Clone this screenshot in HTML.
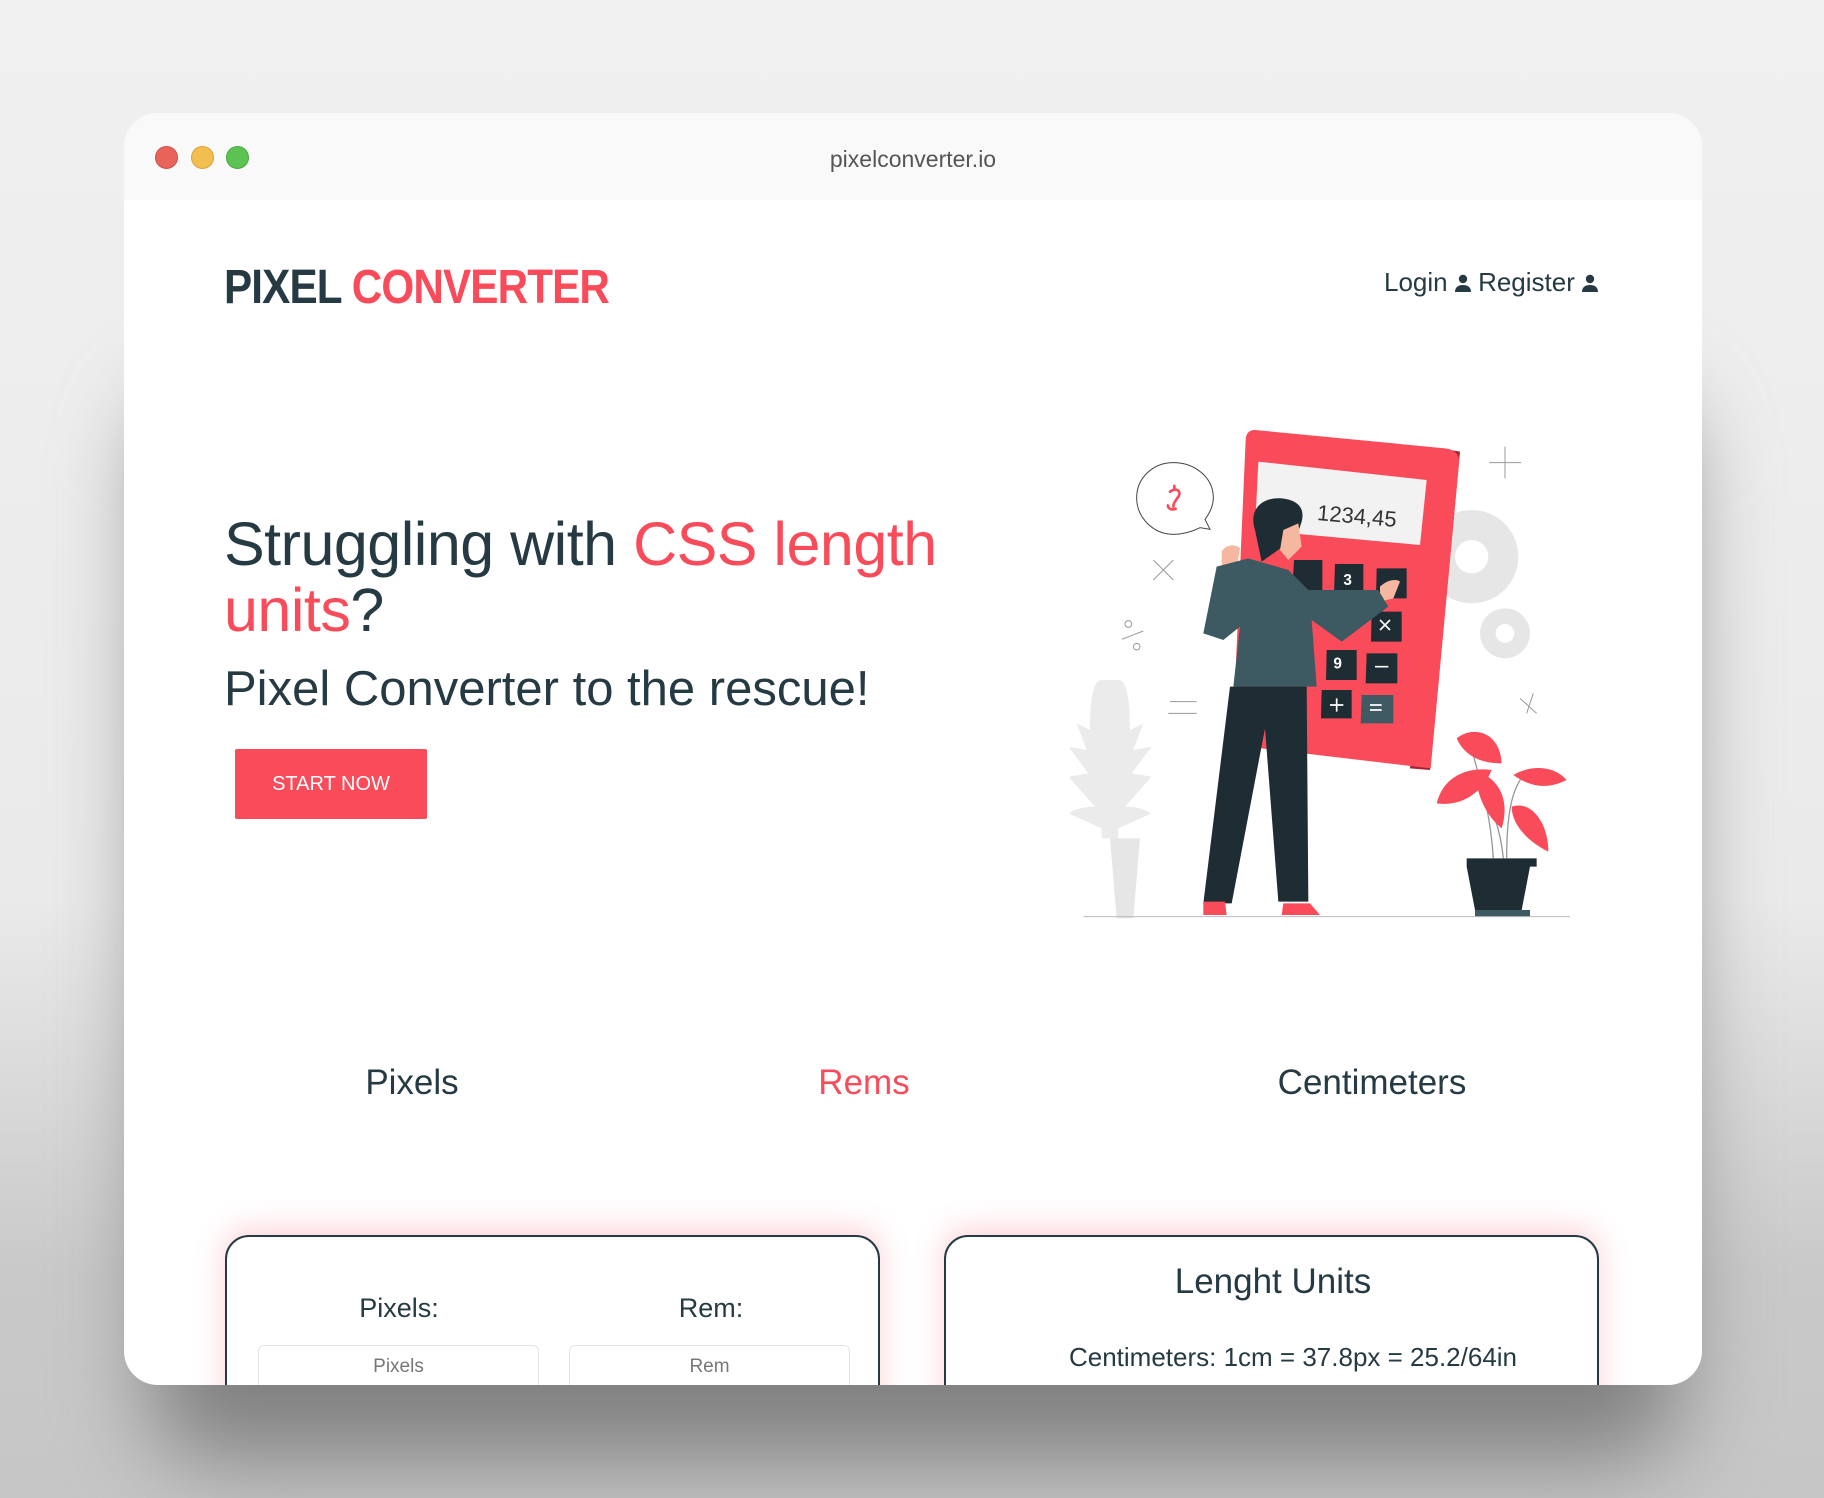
<!DOCTYPE html>
<html><head><meta charset="utf-8"><style>
*{margin:0;padding:0;box-sizing:border-box}
html,body{width:1824px;height:1498px;overflow:hidden}
body{position:relative;font-family:"Liberation Sans",sans-serif;background:linear-gradient(180deg,#f0f0f0 0%,#eaeaea 60%,#c9c9c9 85%,#c6c6c6 100%)}
.shadow{position:absolute;left:150px;top:400px;width:1530px;height:1060px;background:#808080;filter:blur(45px);border-radius:60px}
.win{position:absolute;left:124px;top:113px;width:1578px;height:1272px;background:#fff;border-radius:34px;overflow:hidden}
.bar{position:absolute;left:0;top:0;width:100%;height:87px;background:#f9f9f9}
.dot{position:absolute;top:33px;width:23px;height:23px;border-radius:50%}
.url{position:absolute;left:0;width:100%;top:33px;text-align:center;font-size:23px;color:#555}
.abs{position:absolute;white-space:nowrap}
.dk{color:#263a43}.rd{color:#f94b5a}
.logo{left:100px;top:147px;font-size:48px;font-weight:900;letter-spacing:-1px;transform:scaleX(0.88);transform-origin:left}
.nav{top:154px;font-size:26px;color:#263a43}
.h1{left:100px;top:398px;font-size:61px;line-height:66px;letter-spacing:-0.5px}
.sub{left:100px;top:548px;font-size:49px;color:#263a43}
.btn{left:111px;top:636px;width:192px;height:70px;background:#f94b5a;color:#fff;font-size:20px;text-align:center;line-height:70px;border-radius:2px}
.tab{top:950px;font-size:35px;transform:translateX(-50%)}
.card{position:absolute;top:1122px;width:655px;height:300px;border:2.5px solid #263a43;border-radius:24px;background:#fff;box-shadow:0 -6px 30px rgba(249,75,90,0.25)}
.lbl{font-size:27px;color:#263a43;transform:translateX(-50%)}
.inp{position:absolute;top:108px;width:281px;height:60px;border:1.5px solid #e4e4e4;border-radius:6px;text-align:center;font-size:19px;color:#777;padding-top:10px}
</style></head><body>
<div class="shadow"></div>
<div class="win">
<div class="bar"></div>
<div class="dot" style="left:31px;background:#e8645a;border:1px solid #cf4f46"></div>
<div class="dot" style="left:67px;background:#f2be4f;border:1px solid #d9a23c"></div>
<div class="dot" style="left:102px;background:#5cc353;border:1px solid #47a83f"></div>
<div class="url">pixelconverter.io</div>

<div class="abs logo"><span class="dk">PIXEL</span> <span class="rd">CONVERTER</span></div>
<div class="abs nav" style="left:1260px">Login <svg width="16" height="18" viewBox="0 0 16 18" style="vertical-align:-1px"><circle cx="8" cy="5" r="4.2" fill="#263a43"/><path d="M0 18c0-5 3.5-7 8-7s8 2 8 7z" fill="#263a43"/></svg> Register <svg width="16" height="18" viewBox="0 0 16 18" style="vertical-align:-1px"><circle cx="8" cy="5" r="4.2" fill="#263a43"/><path d="M0 18c0-5 3.5-7 8-7s8 2 8 7z" fill="#263a43"/></svg></div>

<div class="abs h1"><span class="dk">Struggling with </span><span class="rd">CSS length</span><br><span class="rd">units</span><span class="dk">?</span></div>
<div class="abs sub">Pixel Converter to the rescue!</div>
<div class="abs btn">START NOW</div>

<svg style="position:absolute;left:946px;top:307px" width="510" height="510" viewBox="0 0 1530 1530">
<g fill="none" stroke="#999" stroke-width="3">
<path d="M1305 80v95M1258 128h95"/><path d="M250 420l60 60M310 420l-60 60"/><path d="M1350 835l50 45M1390 820l-20 60"/>
<circle cx="175" cy="612" r="10"/><circle cx="200" cy="680" r="10"/><path d="M155 658l65-25"/>
<path d="M300 845h80M295 880h85"/>
<path d="M310 128c-60 0-110 45-110 105s50 110 110 110c35 0 60-10 80-20l30 5-15-30c15-20 25-40 25-65 0-60-55-105-120-105z" stroke="#444"/>
</g>
<path d="M300 215c20-15 35 0 25 15-10 15-15 20-15 30M313 198v6" stroke="#f94b5a" stroke-width="8" fill="none" stroke-linecap="round"/>
<path d="M320 265c-15 8-30 0-25-12" stroke="#f94b5a" stroke-width="8" fill="none"/>
<g fill="#e6e6e6"><circle cx="1205" cy="410" r="140"/><circle cx="1305" cy="640" r="75"/></g>
<circle cx="1205" cy="410" r="50" fill="#fff"/><circle cx="1305" cy="640" r="28" fill="#fff"/>
<path d="M145 780c30 0 35 80 35 150l40-20-30 80 55-10-60 80 60 10-80 90c40 0 60 10 80 20l-100 45v30h-50v-30l-100-45c20-10 40-20 80-20l-80-90 60-10-60-80 55 10-30-80 40 20c0-70 5-150 35-150z" fill="#ebebeb"/>
<path d="M120 1255h90l-20 240h-50z" fill="#e6e6e6"/>
<path d="M1110 85l60 10-90 955-60-5z" fill="#a3242f"/>
<path d="M555 30l570 55c30 3 45 20 42 45l-85 915-595-70 40-915c1-20 10-30 28-30z" fill="#f94b5a"/>
<path d="M565 125l505 55-20 195-495-45z" fill="#f2f2f2"/>
<text x="740" y="300" font-size="66" fill="#333" transform="rotate(5 740 300)" font-family="Liberation Sans">1234,45</text>
<g fill="#1e2c33">
<path d="M672 420h85v90h-90z"/><path d="M795 432h85v90h-88z"/><path d="M920 445h90v90h-92z"/>
<path d="M905 575h90v90h-92z"/><path d="M770 690h90v90h-92z"/><path d="M890 700h92v90h-95z"/>
<path d="M755 810h90v85h-92z"/>
</g>
<path d="M875 825h95v85h-98z" fill="#3f5a63"/>
<g fill="#fff" font-family="Liberation Sans" font-weight="bold" font-size="46"><text x="820" y="495">3</text><text x="790" y="745">9</text></g>
<g stroke="#fff" stroke-width="5"><path d="M930 600l30 30M960 600l-30 30M915 740h40M780 855h40M800 835v40M900 855h35M900 870h35"/></g>
<path d="M555 330c-20-60 20-100 80-95 50 5 70 30 60 70l-10 30-40 40-70 50z" fill="#1e2c33"/>
<path d="M640 330l45-20 10 70-40 40-25-30z" fill="#f5b7a0"/>
<path d="M455 395c10-20 40-25 55-10l-10 60-45 5z" fill="#f5b7a0"/>
<path d="M930 500c20-20 50-25 60-15l-20 50-40 10z" fill="#f5b7a0"/>
<path d="M440 440l95-25 120 35 60 60 210 0 30 50-140 105-90-65 15 200h-250l20-180-50 40-60-20z" fill="#3d5961"/>
<path d="M480 800h230l5 645h-90l-40-520-100 525h-85z" fill="#1e2c33"/>
<path d="M400 1445h65l5 40h-70z" fill="#f94b5a"/><path d="M640 1450h80l30 35h-115z" fill="#f94b5a"/>
<path d="M1190 1315h210v25h-20l-25 130h-140l-25-130z" fill="#1e2c33"/><path d="M1215 1470h165v20h-165z" fill="#3d5961"/>
<g stroke="#999" stroke-width="4" fill="none"><path d="M1270 1315c-10-150-40-230-60-310M1310 1315c0-150 20-220 60-260M1300 1315c-10-100-40-160-60-200"/></g>
<g fill="#f94b5a"><path d="M1160 955c50-40 130-20 135 75-60 0-110-20-135-75z"/><path d="M1100 1150c20-80 90-110 165-100-30 70-90 110-165 100z"/><path d="M1220 1055c70 20 100 90 75 170-50-40-80-110-75-170z"/><path d="M1330 1065c50-30 120-30 160 15-60 30-110 20-160-15z"/><path d="M1325 1160c60-20 110 50 110 135-60-30-110-80-110-135z"/></g>
<path d="M40 1490h1460" stroke="#bbb" stroke-width="3"/>
</svg>

<div class="abs tab dk" style="left:288px">Pixels</div>
<div class="abs tab rd" style="left:740px">Rems</div>
<div class="abs tab dk" style="left:1248px">Centimeters</div>

<div class="card" style="left:101px">
<div class="abs lbl" style="left:172px;top:56px">Pixels:</div>
<div class="abs lbl" style="left:484px;top:56px">Rem:</div>
<div class="inp" style="left:31px">Pixels</div>
<div class="inp" style="left:342px">Rem</div>
</div>
<div class="card" style="left:820px">
<div class="abs lbl" style="left:327px;top:25px;font-size:35px">Lenght Units</div>
<div class="abs lbl" style="left:347px;top:105px;font-size:26px">Centimeters: 1cm = 37.8px = 25.2/64in</div>
</div>
</div>
</body></html>
